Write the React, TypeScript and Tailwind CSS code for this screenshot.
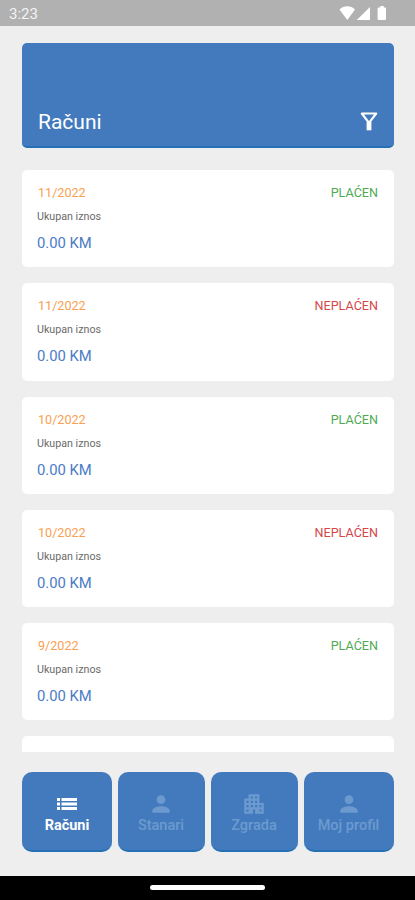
import React from 'react'
import { clsx } from 'clsx'
import { MdApartment, MdPerson } from 'react-icons/md'

type IconProps = { size?: number; className?: string }

type Bill = {
  period: string
  amount: string
  paid: boolean
}

const bills: Bill[] = [
  { period: '11/2022', amount: '0.00 KM', paid: true },
  { period: '11/2022', amount: '0.00 KM', paid: false },
  { period: '10/2022', amount: '0.00 KM', paid: true },
  { period: '10/2022', amount: '0.00 KM', paid: false },
  { period: '9/2022', amount: '0.00 KM', paid: true },
]

function ListIcon({ size = 24, className }: IconProps) {
  return (
    <svg width={size} height={size} viewBox="0 0 26 26" fill="currentColor" className={className}>
      <path d="M3 7h3v3H3zM3 11.500h3v3H3zM3 16h3v3H3zM7.500 7H23v3H7.500zM7.500 11.500H23v3H7.500zM7.500 16H23v3H7.500z" />
    </svg>
  )
}

function FilterIcon() {
  return (
    <svg width="18" height="19" viewBox="0 0 18 19" className="mb-1" fill="none" stroke="currentColor">
      <path d="M1.800 1.500H16.200L9 10.800z" strokeWidth="2.200" strokeLinejoin="round" />
      <path d="M9 10v8.300" strokeWidth="4.800" />
    </svg>
  )
}

const tabs: { label: string; icon: React.ComponentType<IconProps>; width: string }[] = [
  { label: 'Računi', icon: ListIcon, width: 'w-[90px]' },
  { label: 'Stanari', icon: MdPerson, width: 'w-[87px]' },
  { label: 'Zgrada', icon: MdApartment, width: 'w-[87px]' },
  { label: 'Moj profil', icon: MdPerson, width: 'w-[90px]' },
]

function StatusBar() {
  return (
    <div className="flex h-[26px] shrink-0 items-center justify-between bg-[#b1b1b1] pr-[28px] pl-[9px] text-white">
      <span className="pt-[2px] text-[15px] leading-none text-[#f3f3f3]">3:23</span>
      <svg width="48" height="16" viewBox="0 0 48 16" fill="currentColor">
        <path d="M0.500 4.600C4.800 0.200 11.700 0.200 16 4.600L8.300 15z" />
        <path d="M31 2V15H17.800z" />
        <path d="M41.200 1h3.600v1.400h1.200a1 1 0 0 1 1 1v10.600a1 1 0 0 1-1 1h-6.400a1 1 0 0 1-1-1V3.400a1 1 0 0 1 1-1h1.600z" />
      </svg>
    </div>
  )
}

function BillCard({ bill }: { bill: Bill }) {
  return (
    <div className="h-[97.25px] shrink-0 rounded-[5px] bg-white px-4 pt-[15px]">
      <div className="flex items-center justify-between leading-4">
        <span className="text-[12.6px] text-[#f99f52]">{bill.period}</span>
        <span className={clsx('text-[12.6px]', bill.paid ? 'text-[#4fab53]' : 'text-[#d3474b]')}>
          {bill.paid ? 'PLAĆEN' : 'NEPLAĆEN'}
        </span>
      </div>
      <p className="mt-[9px] -ml-px text-[10.7px] leading-[14px] text-[#6a6a6a]">Ukupan iznos</p>
      <p className="mt-[10px] -ml-px text-[14.8px] leading-[18px] text-[#4a7cc4]">{bill.amount}</p>
    </div>
  )
}

export default function App() {
  return (
    <div className="flex h-[900px] w-[415px] flex-col overflow-hidden bg-[#eeeeee] font-['Roboto',sans-serif]">
      <StatusBar />

      <header className="mr-[21px] ml-[22px] mt-[17px] flex h-[105px] shrink-0 items-end justify-between rounded-[5px] border-b-2 border-[#2470b5] bg-[#427abd] px-4 pb-[11px] text-white">
        <h1 className="text-[21px] leading-[26px]">Računi</h1>
        <FilterIcon />
      </header>

      <main className="mr-[21px] ml-[22px] mt-[22px] flex h-[581.5px] shrink-0 flex-col gap-4 overflow-hidden">
        {bills.map((bill, i) => (
          <BillCard key={i} bill={bill} />
        ))}
        <div className="h-24 shrink-0 rounded-[5px] bg-white" />
      </main>

      <nav className="mr-[21px] ml-[22px] mt-[20.5px] flex h-[80px] shrink-0 justify-between">
        {tabs.map(({ label, icon: Icon, width }, i) => (
          <button
            key={label}
            className={clsx(
              'flex flex-col items-center justify-start rounded-[10px] border-b-2 border-[#2470b5] bg-[#427abd] pt-[18.5px] text-[14.5px] leading-[18px]',
              width,
              i === 0 ? 'font-bold text-white' : 'pr-px font-medium text-[#6c9acf]',
            )}
          >
            <Icon size={26} />
            <span>{label}</span>
          </button>
        ))}
      </nav>

      <div className="mt-auto flex h-6 shrink-0 justify-center bg-black pt-[9px]">
        <div className="h-[5px] w-[115px] rounded-full bg-white" />
      </div>
    </div>
  )
}
